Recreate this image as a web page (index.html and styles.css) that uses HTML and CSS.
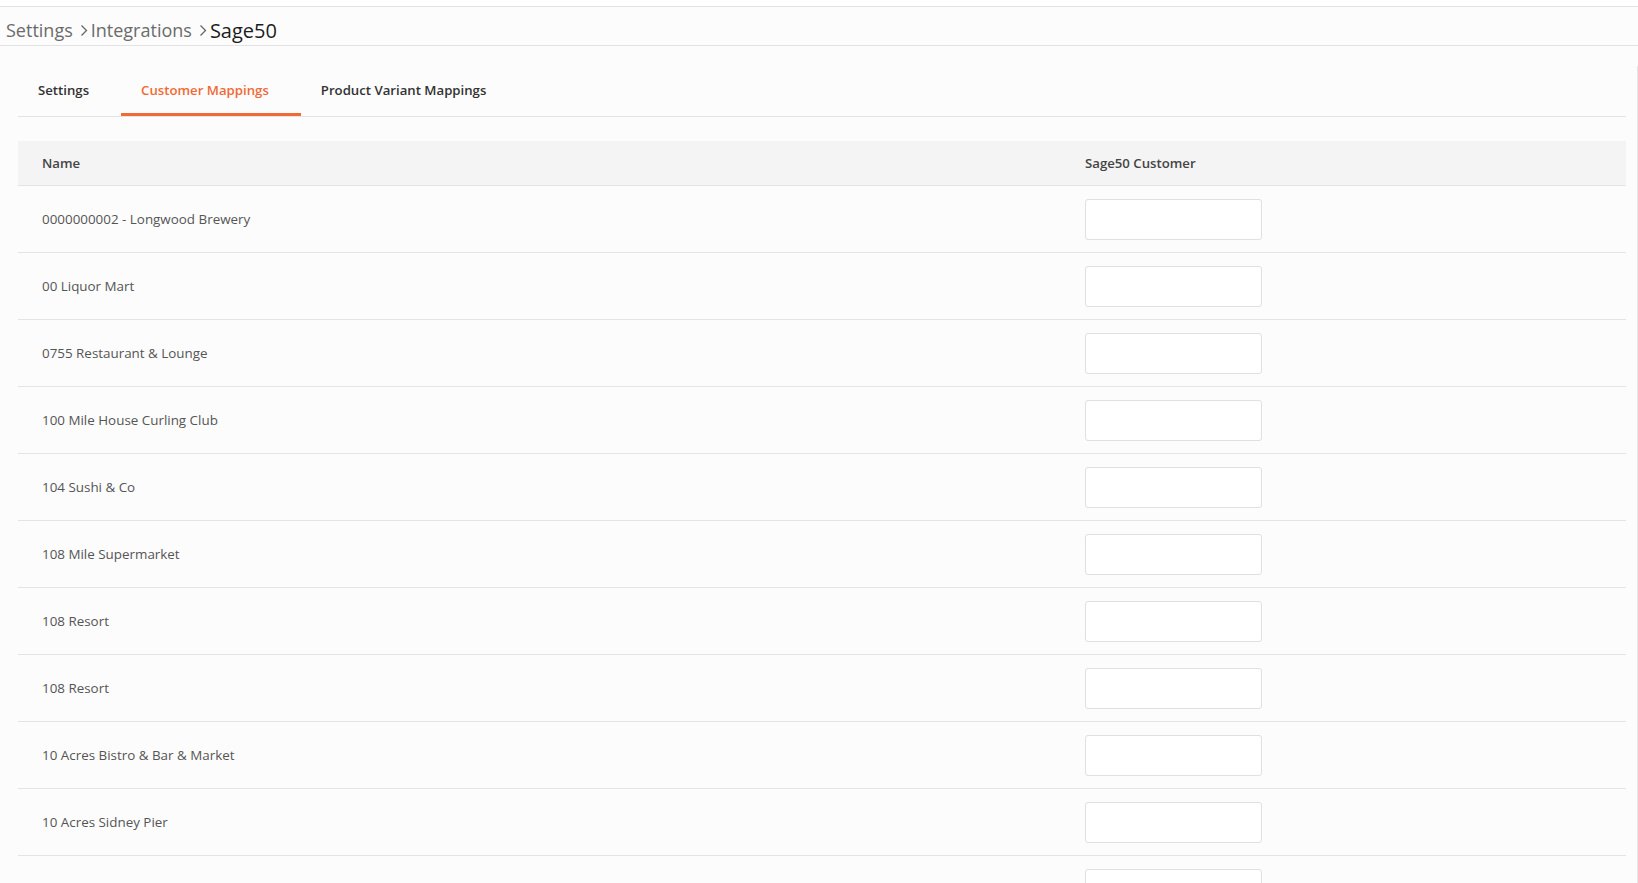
FILE: index.html
```html
<!DOCTYPE html>
<html lang="en">
<head>
    <meta charset="UTF-8">
    <meta name="viewport" content="width=device-width, initial-scale=1.0">
    <title>Sage50 Integration</title>
    <link rel="stylesheet" href="styles.css">
</head>
<body>
    <div class="topbar"></div>
    <div class="breadcrumb">
        <span class="crumb">Settings</span>
        <svg class="sep" width="8" height="13" viewBox="0 0 8 13"><path d="M1.5 1.5 L6.5 6.5 L1.5 11.5" fill="none" stroke="#666" stroke-width="1.3"/></svg>
        <span class="crumb">Integrations</span>
        <svg class="sep" width="8" height="13" viewBox="0 0 8 13"><path d="M1.5 1.5 L6.5 6.5 L1.5 11.5" fill="none" stroke="#666" stroke-width="1.3"/></svg>
        <span class="crumb current">Sage50</span>
    </div>

    <div class="content">
        <div class="tabs">
            <div class="tab">Settings</div>
            <div class="tab active">Customer Mappings</div>
            <div class="tab">Product Variant Mappings</div>
        </div>

        <div class="table">
            <div class="row head">
                <div class="cell">Name</div>
                <div class="cell">Sage50 Customer</div>
            </div>
            <div id="rows"></div>
        </div>
    </div>

    <script>
        // last entry is below the fold, name not shown
        const customers = [
            '0000000002 - Longwood Brewery',
            '00 Liquor Mart',
            '0755 Restaurant & Lounge',
            '100 Mile House Curling Club',
            '104 Sushi & Co',
            '108 Mile Supermarket',
            '108 Resort',
            '108 Resort',
            '10 Acres Bistro & Bar & Market',
            '10 Acres Sidney Pier',
            ''
        ];
        const rowsEl = document.getElementById('rows');
        customers.forEach(name => {
            const row = document.createElement('div');
            row.className = 'row';
            row.innerHTML = `
                <div class="cell name"></div>
                <div class="cell"><input type="text" class="mapping"></div>
            `;
            row.querySelector('.name').textContent = name;
            rowsEl.appendChild(row);
        });
    </script>
</body>
</html>
```

FILE: styles.css
```css
html, body {
    margin: 0;
    padding: 0;
    height: 100%;
    overflow: hidden;
}
body {
    font-family: "Open Sans", "Noto Sans", sans-serif;
    background: #fcfcfc;
    color: #444;
}
.topbar {
    height: 6px;
    border-bottom: 1px solid #e3e3e3;
    background: #fff;
}
.breadcrumb {
    height: 39px;
    box-sizing: border-box;
    padding: 8px 0 0 6px;
    display: flex;
    align-items: center;
    border-bottom: 1px solid #e3e3e3;
    font-size: 18px;
}
.crumb {
    color: #6b6b6b;
}
.crumb.current {
    color: #1c1c1c;
    font-size: 20px;
    font-weight: 500;
}
.sep {
    margin: 1px 3px 0 7px;
}
.content {
    padding: 0 11px 0 18px;
    border-right: 1px solid #e6e6e6;
    height: 100%;
}
.tabs {
    display: flex;
    margin-top: 20px;
    border-bottom: 1px solid #e3e3e3;
}
.tab {
    height: 50px;
    box-sizing: border-box;
    padding: 3px 20px 2px;
    display: flex;
    align-items: center;
    font-size: 13.2px;
    font-weight: 600;
    color: #333;
    border-bottom: 3px solid transparent;
}
.tab:first-child {
    margin-right: 12px;
}
.tab.active {
    color: #f06a35;
    border-bottom-color: #f06a35;
    padding-right: 32px;
}
.table {
    margin-top: 24px;
    font-size: 13.4px;
}
.row {
    display: grid;
    grid-template-columns: 1043px 1fr;
    height: 67px;
    box-sizing: border-box;
    border-bottom: 1px solid #e4e4e4;
    align-items: center;
    color: #555;
}
.row.head {
    height: 45px;
    background: #f4f4f4;
    font-weight: 600;
    font-size: 13.2px;
    color: #444;
}
.cell {
    padding-left: 24px;
}
.mapping {
    display: block;
    width: 177px;
    height: 41px;
    box-sizing: border-box;
    border: 1px solid #e0e0e0;
    border-radius: 3px;
    background: #fff;
    margin-top: 1px;
}
```
